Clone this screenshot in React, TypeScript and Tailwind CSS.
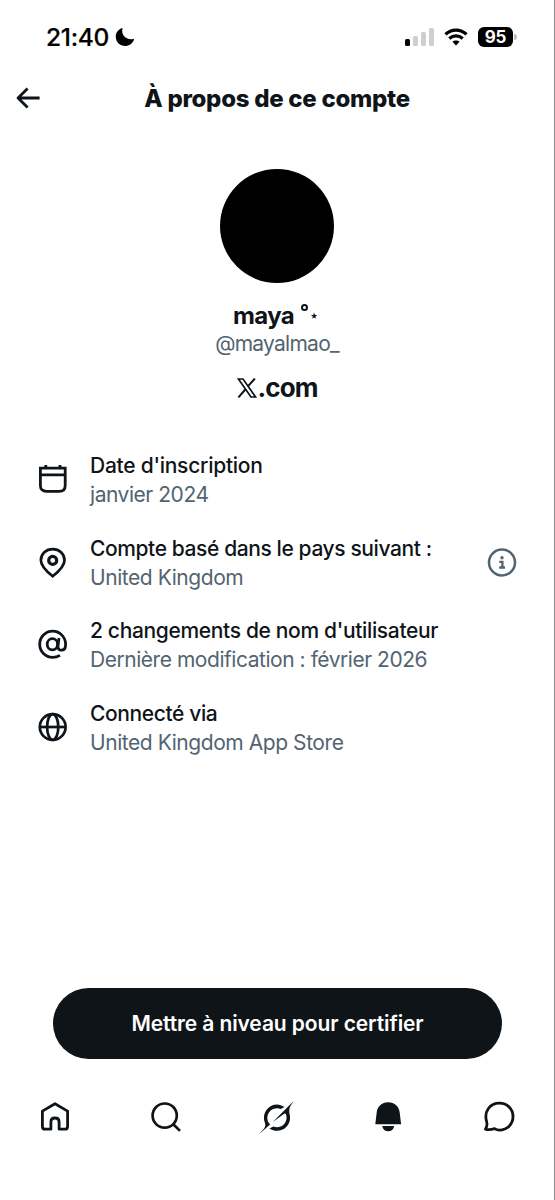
import React from 'react';

type IconProps = { className?: string };

const MoonIcon = ({ className }: IconProps) => (
    <svg viewBox="0 0 20 20" className={className} fill="currentColor">
        <path d="M6.9 1.1C7.2.7 7.7.9 7.5 1.5C5.9 7.6 10.8 13.4 18.2 12.1C18.9 12 19.2 12.4 18.9 13C17.3 16.8 14 19 10.3 19C5 19 .8 15 .8 9.7C.8 5.9 3.1 2.6 6.9 1.1Z" />
    </svg>
);

const WifiIcon = ({ className }: IconProps) => (
    <svg viewBox="0 0 24 18" className={className} fill="none" stroke="currentColor" strokeWidth="3.2">
        <path d="M1.4 6.3C7.4.6 16.6.6 22.6 6.3" />
        <path d="M5.3 10.5C9.2 7 14.8 7 18.7 10.5" />
        <path d="M12 17.4L8.4 13.8C10.4 12 13.6 12 15.6 13.8Z" fill="currentColor" stroke="none" />
    </svg>
);

const BackIcon = ({ className }: IconProps) => (
    <svg viewBox="0 0 24 22" className={className} fill="none" stroke="currentColor" strokeWidth="2.8" strokeLinejoin="round">
        <path d="M11.6 1.4L2 11L11.6 20.6M2 11H23.6" />
    </svg>
);

const XIcon = ({ className }: IconProps) => (
    <svg viewBox="0 0 20 20" className={className} fill="none" stroke="currentColor">
        <path d="M1.4 1H6L18.6 19H14Z" strokeWidth="1.7" />
        <path d="M17.9.5L11.1 8.2M8.7 11L1.4 19.4" strokeWidth="2" />
    </svg>
);

const CalendarIcon = ({ className }: IconProps) => (
    <svg viewBox="0 0 36 36" className={className} fill="none" stroke="currentColor" strokeWidth="2.8">
        <path d="M5.4 6.2H30.2V23.4C30.2 27.4 28 29.3 24.2 29.3H11.4C7.6 29.3 5.4 27.4 5.4 23.4Z" />
        <path d="M5.4 12.8H30.2M10.8 3V7M25 3V7" />
    </svg>
);

const PinIcon = ({ className }: IconProps) => (
    <svg viewBox="0 0 36 36" className={className} fill="none" stroke="currentColor" strokeWidth="2.7">
        <path d="M17.7 31.2C11.4 26.3 5.9 21.4 5.9 15.2C5.9 8.7 11.1 4.1 17.7 4.1C24.3 4.1 29.5 8.7 29.5 15.2C29.5 21.4 24 26.3 17.7 31.2Z" />
        <circle cx="17.7" cy="15.4" r="4" strokeWidth="3.2" />
    </svg>
);

const AtIcon = ({ className }: IconProps) => (
    <svg viewBox="0 0 36 36" className={className} fill="none" stroke="currentColor" strokeWidth="2.8">
        <ellipse cx="17.4" cy="17.3" rx="5.2" ry="5.6" />
        <path d="M24 11L23 18.7C22.7 21.6 24 23.2 26.3 23.2C29.2 23.2 30.6 20.6 30.6 17.4C30.6 10.3 25 4.2 17.7 4.2C10.4 4.2 4.7 10 4.7 17.3C4.7 24.6 10.4 30.4 17.6 30.4C20.6 30.4 22.8 29.7 25 28.4" />
    </svg>
);

const GlobeIcon = ({ className }: IconProps) => (
    <svg viewBox="0 0 36 36" className={className} fill="none" stroke="currentColor" strokeWidth="2.7">
        <circle cx="17.7" cy="17" r="12.9" />
        <ellipse cx="17.7" cy="17" rx="5.6" ry="12.9" />
        <path d="M4.7 17H30.7" />
    </svg>
);

const InfoIcon = ({ className }: IconProps) => (
    <svg viewBox="0 0 30 30" className={className} fill="none" stroke="currentColor" strokeWidth="2.5">
        <circle cx="15" cy="14.5" r="13" />
        <path d="M12.3 13.9H15.4V19.7M12.2 19.5H18" strokeWidth="2.3" />
        <circle cx="15" cy="9.7" r="1.7" fill="currentColor" stroke="none" />
    </svg>
);

const HomeIcon = ({ className }: IconProps) => (
    <svg viewBox="0 0 36 36" className={className} fill="none" stroke="currentColor" strokeWidth="2.8" strokeLinejoin="round">
        <path d="M18 4.7L30.6 12.1V27.4C30.6 29.3 29.7 30.2 27.8 30.2H22.1V22.9C22.1 20.5 20.4 19 18 19S13.9 20.5 13.9 22.9V30.2H8.2C6.3 30.2 5.4 29.3 5.4 27.4V12.1Z" />
    </svg>
);

const SearchIcon = ({ className }: IconProps) => (
    <svg viewBox="0 0 36 36" className={className} fill="none" stroke="currentColor" strokeWidth="2.7">
        <circle cx="16.7" cy="16.6" r="12.1" />
        <path d="M25.3 25.2L32 31.9" />
    </svg>
);

const GrokIcon = ({ className }: IconProps) => (
    <svg viewBox="0 0 24 24" className={className} fill="currentColor">
        <path d="M9.27 15.29l7.978-5.897c.391-.29.95-.177 1.137.272.98 2.369.542 5.215-1.41 7.169-1.951 1.954-4.667 2.382-7.149 1.406l-2.711 1.257c3.889 2.661 8.611 2.003 11.562-.953 2.341-2.344 3.066-5.539 2.388-8.42l.006.007c-.983-4.232.242-5.924 2.75-9.383.06-.082.12-.164.179-.248l-3.301 3.305v-.01L9.267 15.292M7.623 16.723c-2.792-2.67-2.31-6.801.071-9.184 1.761-1.763 4.647-2.483 7.166-1.425l2.705-1.25a7.808 7.808 0 00-1.829-1A8.975 8.975 0 005.984 5.83c-2.533 2.536-3.33 6.436-1.962 9.764 1.022 2.487-.653 4.246-2.34 6.022-.599.63-1.199 1.259-1.682 1.925l7.62-6.815" />
    </svg>
);

const BellIcon = ({ className }: IconProps) => (
    <svg viewBox="0 0 36 36" className={className} fill="currentColor">
        <path d="M18.2 3.2C11.8 3.2 7.1 7.5 6.7 13.6L5.3 25.3H31.1L29.7 13.6C29.3 7.5 24.6 3.2 18.2 3.2Z" />
        <path d="M12.2 26.9H24.2C23.6 30.4 21.4 32.3 18.2 32.3S12.8 30.4 12.2 26.9Z" />
    </svg>
);

const MessageIcon = ({ className }: IconProps) => (
    <svg viewBox="0 0 36 36" className={className} fill="none" stroke="currentColor" strokeWidth="2.8" strokeLinejoin="round">
        <path d="M4.5 30.1C6.2 27.7 6.4 25.6 5.6 22.5C2.7 12.3 9 4.2 18.4 4.2C26.2 4.2 32 10 32 17.6C32 25.3 26.2 31.1 18.5 31.1C16.6 31.1 15.1 30.6 13.6 29.6C10.5 30.5 7.5 31 4.5 30.1Z" />
    </svg>
);

const details = [
    { Icon: CalendarIcon, title: "Date d'inscription", value: 'janvier 2024', titleClass: 'tracking-[-0.26px]', valueClass: 'tracking-[-0.46px]' },
    { Icon: PinIcon, title: 'Compte basé dans le pays suivant :', value: 'United Kingdom', titleClass: 'tracking-[-0.4px]', valueClass: 'tracking-[-0.44px]', info: true },
    { Icon: AtIcon, title: "2 changements de nom d'utilisateur", value: 'Dernière modification : février 2026', titleClass: 'tracking-[-0.34px]', valueClass: 'tracking-[-0.46px]' },
    { Icon: GlobeIcon, title: 'Connecté via', value: 'United Kingdom App Store', titleClass: 'tracking-[-0.38px]', valueClass: 'tracking-[-0.44px]' },
];

const tabs = [
    { label: 'Accueil', Icon: HomeIcon, size: 'size-9' },
    { label: 'Recherche', Icon: SearchIcon, size: 'size-9' },
    { label: 'Grok', Icon: GrokIcon, size: 'size-[35px]' },
    { label: 'Notifications', Icon: BellIcon, size: 'size-9' },
    { label: 'Messages', Icon: MessageIcon, size: 'size-9' },
];

const StatusBar = () => (
    <div className="flex h-[74px] items-center justify-between pr-[37px] pl-[46px] text-black">
        <div className="flex items-center gap-[6px]">
            <span className="text-[24.5px] leading-none font-medium tracking-[-0.3px] [-webkit-text-stroke:0.2px_black]">21:40</span>
            <MoonIcon className="size-5" />
        </div>
        <div className="flex items-center">
            <div className="flex h-[18px] items-end gap-[3px]">
                <span className="h-[7px] w-[5px] rounded-[1.5px] bg-black" />
                <span className="h-[10px] w-[5px] rounded-[1.5px] bg-[#cfcfcf]" />
                <span className="h-[14px] w-[5px] rounded-[1.5px] bg-[#cfcfcf]" />
                <span className="h-[18px] w-[5px] rounded-[1.5px] bg-[#cfcfcf]" />
            </div>
            <WifiIcon className="ml-[10px] h-[18px] w-6" />
            <div className="ml-[10px] flex h-5 w-[35px] items-center justify-center rounded-[6px] bg-black text-[17px] leading-none font-bold tracking-[-0.3px] text-white">95</div>
            <span className="ml-px h-[6px] w-[3px] rounded-r-full bg-[#bdbdbd]" />
        </div>
    </div>
);

const App = () => {
    return (
        <div className="flex h-[1200px] w-[555px] flex-col border-r border-[#8c8c8c] bg-white font-['Inter',sans-serif] text-[#0f1419]">
            <StatusBar />

            <header className="grid h-12 grid-cols-[72px_1fr_72px] items-center">
                <BackIcon className="ml-4 h-[22px] w-6" />
                <h1 className="pt-px text-center text-[24px] leading-none font-extrabold tracking-[-0.28px] whitespace-nowrap">À propos de ce compte</h1>
            </header>

            <section className="flex flex-col items-center pt-[47px]">
                <div className="size-[114px] rounded-full bg-black" />
                <h2 className="mt-[18px] flex h-7 items-center pt-px pr-[3px] text-[24px] font-bold tracking-[-0.7px]">
                    maya
                    <span className="mt-[-17px] ml-[7px] size-[7px] rounded-full border-2 border-current" />
                    <span className="ml-[2px] text-[13px] leading-none font-bold tracking-normal">⋆</span>
                </h2>
                <p className="mt-px h-7 text-[21px] leading-7 tracking-[-0.74px] text-[#536471]">@mayalmao_</p>
                <div className="mt-4 flex h-7 items-center pl-px">
                    <XIcon className="size-5" />
                    <span className="text-[26px] leading-7 font-bold tracking-[-0.9px]">.com</span>
                </div>
            </section>

            <ul className="mt-[50px] flex flex-col gap-[26.5px] pr-[37px] pl-[35px]">
                {details.map(({ Icon, title, value, titleClass, valueClass, info }) => (
                    <li key={title} className="flex h-14 items-center">
                        <Icon className="size-9 shrink-0" />
                        <div className="ml-[19px] flex-1 pt-px text-[21px] whitespace-nowrap">
                            <p className={`leading-7 font-medium ${titleClass}`}>{title}</p>
                            <p className={`pt-px leading-7 text-[#536471] ${valueClass}`}>{value}</p>
                        </div>
                        {info && <InfoIcon className="size-[30px] shrink-0 text-[#536471]" />}
                    </li>
                ))}
            </ul>

            <button className="mt-auto mr-[52px] ml-[53px] h-[71px] shrink-0 rounded-full bg-[#0f1419] text-[21px] font-semibold tracking-[-0.1px] text-white">
                Mettre à niveau pour certifier
            </button>

            <nav className="mt-10 mb-[65px] grid h-9 w-[554px] shrink-0 grid-cols-5 place-items-center">
                {tabs.map(({ label, Icon, size }) => (
                    <button key={label} aria-label={label}>
                        <Icon className={size} />
                    </button>
                ))}
            </nav>
        </div>
    );
};

export default App;
